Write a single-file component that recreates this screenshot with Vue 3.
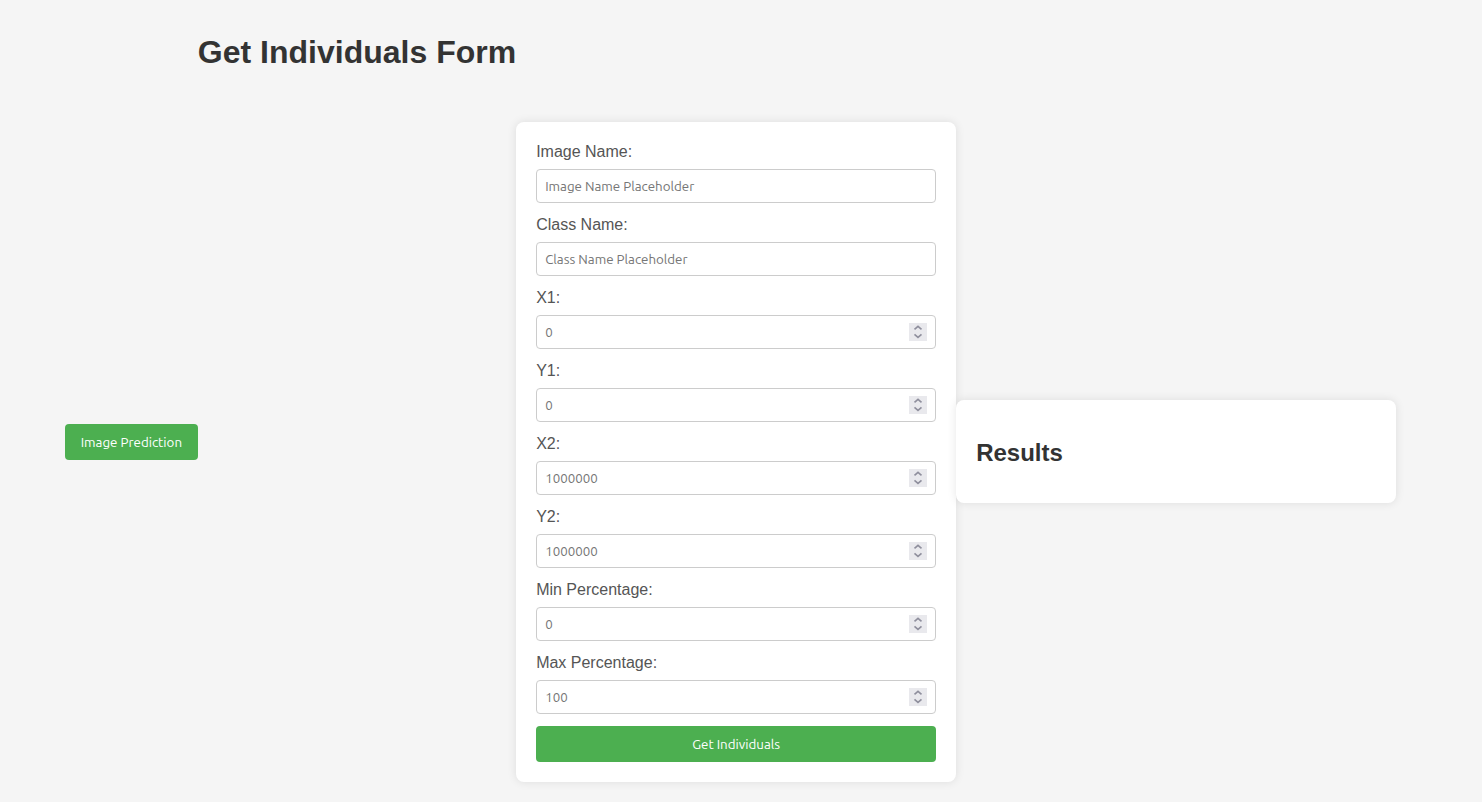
<script setup>
import { reactive } from 'vue'

const fields = reactive([
  { id: 'image-name', label: 'Image Name:', type: 'text', placeholder: 'Image Name Placeholder', value: '' },
  { id: 'class-name', label: 'Class Name:', type: 'text', placeholder: 'Class Name Placeholder', value: '' },
  { id: 'x1', label: 'X1:', type: 'number', placeholder: '0', value: '' },
  { id: 'y1', label: 'Y1:', type: 'number', placeholder: '0', value: '' },
  { id: 'x2', label: 'X2:', type: 'number', placeholder: '1000000', value: '' },
  { id: 'y2', label: 'Y2:', type: 'number', placeholder: '1000000', value: '' },
  { id: 'min-percentage', label: 'Min Percentage:', type: 'number', placeholder: '0', value: '' },
  { id: 'max-percentage', label: 'Max Percentage:', type: 'number', placeholder: '100', value: '' }
])

function step(field, amount) {
  field.value = Number(field.value || 0) + amount
}
</script>

<template>
  <main class="page">
    <button type="button" class="button prediction">Image Prediction</button>
    <h1>Get Individuals Form</h1>
    <form class="card form" @submit.prevent>
      <template v-for="field in fields" :key="field.id">
        <label :for="field.id">{{ field.label }}</label>
        <div class="field">
          <input :id="field.id" v-model="field.value" :type="field.type" :placeholder="field.placeholder" />
          <span v-if="field.type === 'number'" class="stepper">
            <button type="button" tabindex="-1" aria-label="Increase" @click="step(field, 1)">
              <svg width="18" height="9" viewBox="0 0 18 9"><path d="M5.5 6.3 9 3.3l3.5 3" /></svg>
            </button>
            <button type="button" tabindex="-1" aria-label="Decrease" @click="step(field, -1)">
              <svg width="18" height="9" viewBox="0 0 18 9"><path d="M5.5 2.4 9 5.4l3.5-3" /></svg>
            </button>
          </span>
        </div>
      </template>
      <button type="submit" class="button">Get Individuals</button>
    </form>
    <section class="card results">
      <h2>Results</h2>
    </section>
  </main>
</template>

<style>
body {
  background: #f5f5f5;
}
</style>

<style scoped>
.page {
  display: flex;
  justify-content: center;
  align-items: center;
  min-height: 100vh;
  box-sizing: border-box;
  padding: 0 21px 0 0;
  font-family: "Liberation Sans", Arial, sans-serif;
  font-size: 16px;
  color: #333;
}

h1 {
  align-self: flex-start;
  margin: 34px 0 0;
  font-size: 32px;
  line-height: 36px;
  white-space: nowrap;
}

h2 {
  margin: 0;
  font-size: 24px;
  line-height: 27px;
}

.card {
  flex: 0 1 400px;
  padding: 20px;
  background: #fff;
  border-radius: 8px;
  box-shadow: 0 0 10px rgba(0, 0, 0, 0.1);
}

.form {
  display: flex;
  flex-direction: column;
  margin: 122px 0 20px;
}

.results {
  margin-top: 101px;
  padding: 39px 20px 37px;
}

label {
  margin-bottom: 8px;
  line-height: 19px;
  color: #555;
}

.field {
  display: flex;
  align-items: center;
  box-sizing: border-box;
  height: 34px;
  margin-bottom: 12px;
  padding: 0 8px;
  border: 1px solid #ccc;
  border-radius: 4px;
}

.field:focus-within {
  border-color: #4caf50;
}

/* Controls keep the browser's default control text size. */
input {
  flex: 1;
  min-width: 0;
  padding: 2px 0 0;
  border: 0;
  outline: 0;
  background: transparent;
  font-family: Ubuntu, "Noto Sans", sans-serif;
  line-height: 16px;
  color: #333;
  appearance: textfield;
}

input::placeholder {
  color: #757575;
}

input::-webkit-inner-spin-button {
  appearance: none;
  margin: 0;
}

.stepper {
  display: flex;
  flex-direction: column;
  background: #e9e9ed;
}

.stepper button {
  display: flex;
  padding: 0;
  border: 0;
  background: transparent;
}

.stepper path {
  fill: none;
  stroke: #8f8f9d;
  stroke-width: 1.6;
}

.button {
  height: 36px;
  padding: 2px 15px 0;
  border: 0;
  border-radius: 4px;
  background: #4caf50;
  color: #fff;
  font-family: Ubuntu, "Noto Sans", sans-serif;
  line-height: 16px;
  white-space: nowrap;
  cursor: pointer;
}

.prediction {
  min-width: 133px;
  margin-top: 82px;
}
</style>
